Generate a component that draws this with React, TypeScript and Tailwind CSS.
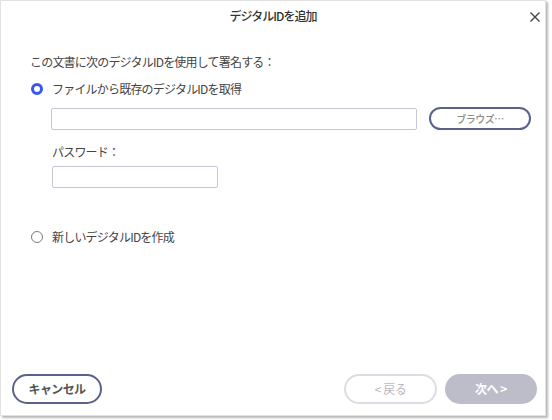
import React from "react";

const font = { fontFamily: '"Noto Sans CJK JP", "Noto Sans", sans-serif' };

function Radio({ checked }: { checked: boolean }) {
  return checked ? (
    <span className="box-border w-[12px] h-[12px] rounded-full border-[3.5px] border-[#3557f0] bg-white shrink-0" />
  ) : (
    <span className="box-border w-[12px] h-[12px] rounded-full border-[1.5px] border-[#7a7a7a] bg-white shrink-0" />
  );
}

export default function App() {
  return (
    <div className="w-[552px] h-[420px] bg-white" style={font}>
      <div className="box-border w-[546px] h-[416px] bg-white border border-[#e2e2e2] shadow-[2px_2px_2px_rgba(0,0,0,0.28)] flex flex-col">
        <div className="relative h-[30px] flex items-center justify-center">
          <span className="text-[12px] font-medium text-[#333] tracking-[-1px]">デジタルIDを追加</span>
          <svg className="absolute right-[4px] top-[10px]" width="12" height="12" viewBox="0 0 12 12">
            <path d="M1.5 1.5 L10.5 10.5 M10.5 1.5 L1.5 10.5" stroke="#444" strokeWidth="1.4" fill="none" />
          </svg>
        </div>
        <div className="flex flex-col pl-[29px] pt-[22px]">
          <div className="h-[18px] flex items-center text-[12px] text-[#444] tracking-[-0.8px]">
            この文書に次のデジタルIDを使用して署名する：
          </div>
          <div className="mt-[9px] h-[18px] flex items-center gap-[9px] pl-[1px]">
            <Radio checked />
            <span className="text-[12px] text-[#444] tracking-[-0.8px]">ファイルから既存のデジタルIDを取得</span>
          </div>
          <div className="mt-[9px] pl-[21px] flex items-center gap-[12px]">
            <div className="box-border w-[366px] h-[22px] border border-[#c6c6d6] rounded-[2px] bg-white" />
            <button className="box-border w-[102px] h-[23px] rounded-full border-2 border-[#5b618a] bg-white text-[10px] font-medium text-[#8a8a8a] flex items-center justify-center tracking-[-0.5px]">
              ブラウズ…
            </button>
          </div>
          <div className="mt-[13px] pl-[22px] h-[18px] flex items-center text-[12px] text-[#444] tracking-[-0.8px]">
            パスワード：
          </div>
          <div className="mt-[5px] pl-[22px]">
            <div className="box-border w-[166px] h-[22px] border border-[#c6c6d6] rounded-[2px] bg-white" />
          </div>
          <div className="mt-[40px] h-[18px] flex items-center gap-[9px] pl-[1px]">
            <Radio checked={false} />
            <span className="text-[12px] text-[#444] tracking-[-0.8px]">新しいデジタルIDを作成</span>
          </div>
        </div>
        <div className="mt-auto mb-[11px] flex items-center pl-[11px] pr-[8px]">
          <button className="box-border w-[90px] h-[30px] rounded-full border-2 border-[#5b618a] bg-white text-[12px] font-bold text-[#555] tracking-[-0.6px]">
            キャンセル
          </button>
          <div className="ml-auto flex gap-[8px]">
            <button className="box-border w-[93px] h-[30px] rounded-full border-2 border-[#dcdce4] bg-white text-[12px] text-[#b8b8c0] tracking-[-0.5px]">
              &lt; 戻る
            </button>
            <button className="box-border w-[92px] h-[30px] rounded-full bg-[#bdbdca] text-[12px] font-bold text-white tracking-[-0.5px]">
              次へ &gt;
            </button>
          </div>
        </div>
      </div>
    </div>
  );
}
